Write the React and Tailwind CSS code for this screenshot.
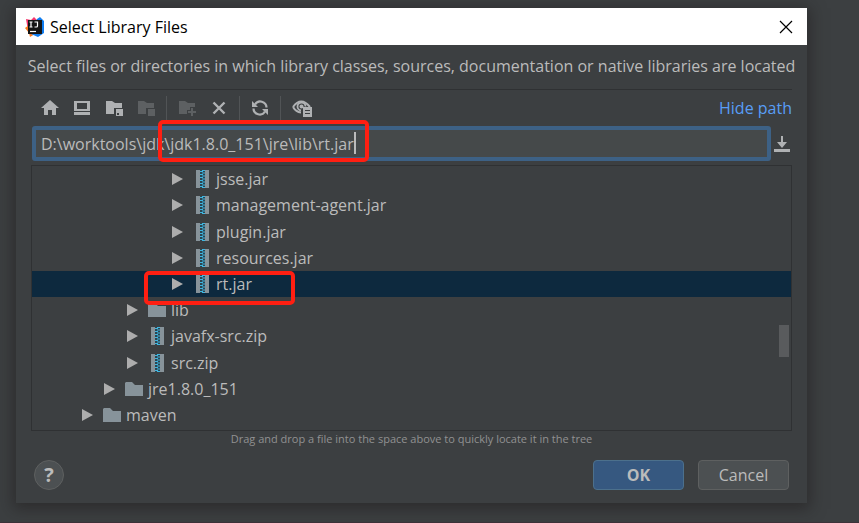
import { useState } from "react";

const nodes = [
  { name: "jsse.jar", type: "zip", indent: "pl-[140px]" },
  { name: "management-agent.jar", type: "zip", indent: "pl-[140px]" },
  { name: "plugin.jar", type: "zip", indent: "pl-[140px]" },
  { name: "resources.jar", type: "zip", indent: "pl-[140px]" },
  { name: "rt.jar", type: "zip", indent: "pl-[140px]", marked: true },
  { name: "lib", type: "folder", indent: "pl-[95px]" },
  { name: "javafx-src.zip", type: "zip", indent: "pl-[95px]" },
  { name: "src.zip", type: "zip", indent: "pl-[95px]" },
  { name: "jre1.8.0_151", type: "folder", indent: "pl-[72px]" },
  { name: "maven", type: "folder", indent: "pl-[50px]" },
];

const Logo = () => (
  <svg className="w-5 h-5 shrink-0" viewBox="0 0 20 20">
    <path d="M1 2l5 1 3-3 3 3v14l-9-3z" fill="#f4366d" />
    <path d="M0 11l4-3 6 9-5 3-1-4z" fill="#f97a1f" />
    <path d="M12 2l3-2 4 4v12l-6 4-7-3z" fill="#0f7cf0" />
    <rect x="3" y="3" width="14" height="14" fill="#151515" />
    <path d="M4.500 5h3M6 5v5M4.500 10h3M9.500 5h3v4q0 1-1 1h-2" fill="none" stroke="#fff" strokeWidth="1.2" />
    <path d="M5 14.500h6" stroke="#fff" strokeWidth="1.2" />
  </svg>
);

const FolderIcon = () => (
  <svg className="w-[18px] h-[18px] shrink-0" viewBox="0 0 18 18">
    <path d="M0 3l1-1h6l3 3h8v11H0z" fill="#87939a" />
  </svg>
);

const ZipIcon = () => (
  <svg className="w-[18px] h-[18px] shrink-0" viewBox="0 0 18 18">
    <path d="M2 0h4v18H2zM11 0h4v18h-4z" fill="#87939a" />
    <path d="M6 0h5v18H6z" fill="#2d4450" />
    <path
      d="M6 1.500h3M6 4.500h3M6 7.500h3M6 10.500h3M6 13.500h3M6 16.500h3M8 .5h3M8 3h3M8 6h3M8 9h3M8 12h3M8 15h3M8 17.500h3"
      stroke="#40b6e0"
      strokeWidth="1"
    />
  </svg>
);

const HomeIcon = () => (
  <svg className="w-[18px] h-[18px]" viewBox="0 0 18 18" fill="#afb1b3">
    <path d="M9 1l9 8h-3v7h-4v-5H7v5H3V9H0z" />
  </svg>
);

const DesktopIcon = () => (
  <svg className="w-[18px] h-[18px]" viewBox="0 0 18 18" fill="#afb1b3">
    <path fillRule="evenodd" d="M1 2h16v10H1zM4 4v6h10V4z" />
    <path d="M1 13h16v3H1z" />
  </svg>
);

const ProjectIcon = () => (
  <svg className="w-[18px] h-[18px]" viewBox="0 0 18 18" fill="#afb1b3">
    <path d="M1 2h6l3 2h7v5H9v6H1z" />
    <path fillRule="evenodd" d="M11 10h7v7h-7zM12 14v2h2v-2z" />
  </svg>
);

const ModuleIcon = () => (
  <svg className="w-[18px] h-[18px]" viewBox="0 0 18 18" fill="#5d6062">
    <path d="M1 2h6l3 2h7v5H9v6H1z" />
    <path d="M11 10h7v7h-7z" />
  </svg>
);

const NewFolderIcon = () => (
  <svg className="w-[18px] h-[18px]" viewBox="0 0 18 18" fill="#5d6062">
    <path d="M1 2h6l3 2h7v4h-5v3H9v4H1z" />
    <path d="M13 9h2v3h3v2h-3v3h-2v-3h-3v-2h3z" />
  </svg>
);

const DeleteIcon = () => (
  <svg className="w-[18px] h-[18px]" viewBox="0 0 18 18" stroke="#afb1b3" strokeWidth="2.4">
    <path d="M3.500 3.500l11 11M14.500 3.500l-11 11" />
  </svg>
);

const RefreshIcon = () => (
  <svg className="w-[18px] h-[18px]" viewBox="0 0 18 18">
    <path d="M4 5.500a6.200 6.200 0 0 1 11.500 3M14 12.500a6.200 6.200 0 0 1-11.500-3" fill="none" stroke="#afb1b3" strokeWidth="2.2" />
    <path d="M1 2v6h6zM17 16v-6h-6z" fill="#afb1b3" />
  </svg>
);

const HiddenIcon = () => (
  <svg className="w-5 h-[18px]" viewBox="0 0 20 18">
    <path d="M1 8q8-11 17 0M1 8q3 5 8 5.500" fill="none" stroke="#afb1b3" strokeWidth="2" />
    <path d="M13.500 7.500A4 4 0 1 0 9 11.500" fill="none" stroke="#afb1b3" strokeWidth="1.800" />
    <circle cx="9.500" cy="7.500" r="2" fill="#afb1b3" />
    <path fillRule="evenodd" d="M11 8h9v10h-9zM13 11v1h5v-1zM13 14v1h5v-1z" fill="#afb1b3" />
  </svg>
);

const HistoryIcon = () => (
  <svg className="w-4 h-4" viewBox="0 0 16 16" fill="#afb1b3">
    <path d="M7 0h2v6h4l-5 6-5-6h4zM0 13h16v3H0z" />
  </svg>
);

function TreeRow({ node, selected, onSelect }) {
  return (
    <li className={`relative flex-1 ${selected ? "bg-[#0d293e]" : ""}`}>
      <button
        onClick={onSelect}
        className={`w-full h-full flex items-center text-left ${node.indent}`}
      >
        <svg className="w-[11px] h-3 shrink-0" viewBox="0 0 11 12">
          <path d="M0 0l11 6-11 6z" fill="#adadad" />
        </svg>
        <span className={node.type === "zip" ? "ml-[11px] mr-1" : "ml-2.5 mr-[5px]"}>
          {node.type === "zip" ? <ZipIcon /> : <FolderIcon />}
        </span>
        {node.name}
      </button>
      {node.marked && (
        <span className="absolute z-10 left-28 top-0 w-[151px] h-[34px] border-4 border-[#ff1f12] rounded-[5px] pointer-events-none" />
      )}
    </li>
  );
}

const Separator = () => <span className="w-px h-6 -mx-[3px] bg-[#515456]" />;

export default function App() {
  const [path, setPath] = useState("D:\\worktools\\jdk\\jdk1.8.0_151\\jre\\lib\\rt.jar");
  const [selected, setSelected] = useState("rt.jar");
  const [showPath, setShowPath] = useState(true);

  return (
    <div className="min-h-screen bg-[#3c3f41] border-b border-[#3d3239] pt-2 pl-4 pr-[52px] pb-[19px] font-['Open_Sans','Noto_Sans',sans-serif] text-[16px] leading-5 text-[#bbbbbb]">
      <div role="dialog" aria-labelledby="title" className="bg-[#3c3f41] shadow-[0_3px_14px_3px_rgba(30,25,25,0.5)]">
        {/* Title bar */}
        <div className="h-[37px] bg-white text-black flex items-center pl-[9px] pr-3.5">
          <Logo />
          <h1 id="title" className="ml-[5px] flex-1">Select Library Files</h1>
          <button aria-label="Close">
            <svg className="w-3.5 h-3.5" viewBox="0 0 14 14" stroke="#000" strokeWidth="1.2">
              <path d="M1 1l12 12M13 1L1 13" />
            </svg>
          </button>
        </div>

        <div className="px-[15px]">
          <p className="h-[45px] pb-0.5 flex items-center justify-center whitespace-nowrap border-b border-[#2f3133]">
            Select files or directories in which library classes, sources, documentation or native libraries are located
          </p>

          {/* Toolbar */}
          <div className="h-9 flex items-center gap-3.5 pl-2.5">
            <button aria-label="Home"><HomeIcon /></button>
            <button aria-label="Desktop"><DesktopIcon /></button>
            <button aria-label="Project directory"><ProjectIcon /></button>
            <button aria-label="Module directory" disabled><ModuleIcon /></button>
            <Separator />
            <button aria-label="New folder" disabled><NewFolderIcon /></button>
            <button aria-label="Delete"><DeleteIcon /></button>
            <Separator />
            <button aria-label="Refresh"><RefreshIcon /></button>
            <Separator />
            <button aria-label="Show hidden files"><HiddenIcon /></button>
            <button onClick={() => setShowPath(!showPath)} className="ml-auto text-[#589df6]">
              {showPath ? "Hide path" : "Show path"}
            </button>
          </div>

          {/* Path field */}
          {showPath && (
            <div className="flex items-center gap-[3px] pl-px pr-0.5">
              <div className="relative flex-1">
                <input
                  aria-label="Path"
                  value={path}
                  onChange={(e) => setPath(e.target.value)}
                  className="block w-full h-[35px] px-[5px] bg-[#45494a] border-4 border-[#3d6185] rounded-[3px] outline-none caret-transparent"
                />
                <span className="absolute left-[322px] top-1.5 w-0.5 h-[22px] bg-[#bbbbbb]" />
                <span className="absolute left-[126px] -top-[6px] w-[211px] h-[42px] border-4 border-[#ff1f12] rounded-[5px] pointer-events-none" />
              </div>
              <button aria-label="Recent paths"><HistoryIcon /></button>
            </div>
          )}

          {/* File tree */}
          <div className="relative mt-1 border border-[#2f3133]">
            <ul className="h-[264px] pb-0.5 flex flex-col">
              {nodes.map((node) => (
                <TreeRow
                  key={node.name}
                  node={node}
                  selected={selected === node.name}
                  onSelect={() => setSelected(node.name)}
                />
              ))}
            </ul>
            <span className="absolute right-0.5 top-[159px] w-2.5 h-8 bg-[#595b5d]" />
          </div>
          <p className="text-center text-[11px] leading-4 text-[#919191]">
            Drag and drop a file into the space above to quickly locate it in the tree
          </p>

          {/* Buttons */}
          <div className="flex items-center gap-3.5 pt-[13px] pb-[13px] pl-[3px] pr-[3px]">
            <button
              aria-label="Help"
              className="mr-auto w-[30px] h-[30px] rounded-full bg-[#4c5052] border border-[#5e6060] text-[20px] font-bold flex items-center justify-center"
            >
              ?
            </button>
            <button className="w-[91px] h-[30px] rounded bg-[#365880] border border-[#4c708c] font-bold">OK</button>
            <button className="w-[91px] h-[30px] rounded bg-[#4c5052] border border-[#5e6060]">Cancel</button>
          </div>
        </div>
      </div>
    </div>
  );
}
